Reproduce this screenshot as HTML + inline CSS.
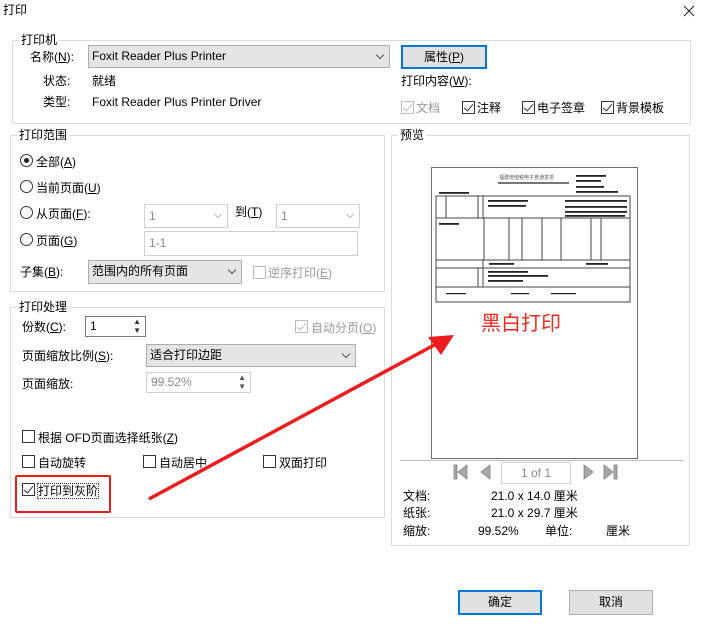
<!DOCTYPE html>
<html><head><meta charset="utf-8"><style>
*{margin:0;padding:0;box-sizing:border-box}
body{width:703px;height:628px;background:#fff;position:relative;overflow:hidden;font-family:"Liberation Sans","Noto Sans CJK SC",sans-serif;font-size:12px;color:#000}
.a{position:absolute;white-space:nowrap;line-height:14px}
.g{position:absolute;border:1px solid #dcdcdc}
.gl{position:absolute;background:#fff;padding:0 2px;line-height:14px}
.cb{position:absolute;width:13px;height:13px;border:1px solid #333;background:#fff}
.cb.k::after{content:"";position:absolute;left:3px;top:0px;width:4px;height:8px;border:solid #333;border-width:0 1.5px 1.5px 0;transform:rotate(40deg)}
.cb.d{border-color:#bcbcbc}.cb.d::after{border-color:#bcbcbc}
.rd{position:absolute;width:13px;height:13px;border:1px solid #333;border-radius:50%;background:#fff}
.rd.on::after{content:"";position:absolute;left:3px;top:3px;width:5px;height:5px;border-radius:50%;background:#222}
.cmb{position:absolute;background:#e5e5e5;border:1px solid #adadad;padding-left:3px;line-height:20px}
.box{position:absolute;border:1px solid #d0d0d0;background:#fff;color:#8a8a8a;padding-left:4px}
.chev{position:absolute;right:6px;top:6px;width:6px;height:6px;border:solid #555;border-width:0 1px 1px 0;transform:rotate(45deg)}
.chev.l{border-color:#bbb}
.btn{position:absolute;background:#e1e1e1;border:1px solid #adadad;text-align:center;line-height:22px}
.btn.p{border:2px solid #0078d7;line-height:20px}
.gr{color:#9a9a9a}
</style></head><body>
<div class="a" style="left:3px;top:3px">打印</div>
<svg style="position:absolute;left:683px;top:5px" width="12" height="12"><path d="M1 1L11 11M11 1L1 11" stroke="#222" stroke-width="1"/></svg>

<div class="g" style="left:12px;top:40px;width:679px;height:84px"></div>
<div class="gl" style="left:19px;top:33px">打印机</div>
<div class="a" style="left:30px;top:50px">名称(<u>N</u>):</div>
<div class="cmb" style="left:88px;top:45px;width:302px;height:23px">Foxit Reader Plus Printer<div class="chev"></div></div>
<div class="btn p" style="left:401px;top:45px;width:86px;height:24px">属性(<u>P</u>)</div>
<div class="a" style="left:43px;top:74px">状态:</div><div class="a" style="left:92px;top:74px">就绪</div>
<div class="a" style="left:43px;top:95px">类型:</div><div class="a" style="left:92px;top:95px">Foxit Reader Plus Printer Driver</div>
<div class="a" style="left:401px;top:74px">打印内容(<u>W</u>):</div>
<div class="cb k d" style="left:401px;top:101px"></div><div class="a gr" style="left:416px;top:101px">文档</div>
<div class="cb k" style="left:462px;top:101px"></div><div class="a" style="left:477px;top:101px">注释</div>
<div class="cb k" style="left:522px;top:101px"></div><div class="a" style="left:537px;top:101px">电子签章</div>
<div class="cb k" style="left:601px;top:101px"></div><div class="a" style="left:616px;top:101px">背景模板</div>

<div class="g" style="left:10px;top:135px;width:375px;height:157px"></div>
<div class="gl" style="left:17px;top:128px">打印范围</div>
<div class="rd on" style="left:20px;top:154px"></div><div class="a" style="left:36px;top:155px">全部(<u>A</u>)</div>
<div class="rd" style="left:20px;top:180px"></div><div class="a" style="left:36px;top:181px">当前页面(<u>U</u>)</div>
<div class="rd" style="left:20px;top:206px"></div><div class="a" style="left:36px;top:207px">从页面(<u>F</u>):</div>
<div class="box" style="left:144px;top:204px;width:84px;height:24px;line-height:22px">1<div class="chev l"></div></div>
<div class="a" style="left:235px;top:205px">到(<u>T</u>)</div>
<div class="box" style="left:276px;top:204px;width:84px;height:24px;line-height:22px">1<div class="chev l"></div></div>
<div class="rd" style="left:20px;top:233px"></div><div class="a" style="left:36px;top:234px">页面(<u>G</u>)</div>
<div class="box" style="left:144px;top:231px;width:214px;height:25px;line-height:23px">1-1</div>
<div class="a" style="left:20px;top:265px">子集(<u>B</u>):</div>
<div class="cmb" style="left:88px;top:260px;width:154px;height:24px">范围内的所有页面<div class="chev"></div></div>
<div class="cb d" style="left:253px;top:266px"></div><div class="a gr" style="left:268px;top:266px">逆序打印(<u>E</u>)</div>

<div class="g" style="left:10px;top:307px;width:375px;height:211px"></div>
<div class="gl" style="left:17px;top:300px">打印处理</div>
<div class="a" style="left:22px;top:320px">份数(<u>C</u>):</div>
<div class="box" style="left:85px;top:316px;width:61px;height:21px;border-color:#7a7a7a;color:#000;line-height:19px">1<span style="position:absolute;right:4px;top:0;font-size:8px;line-height:9px;color:#333">▲<br>▼</span></div>
<div class="cb k d" style="left:295px;top:320px"></div><div class="a gr" style="left:311px;top:321px">自动分页(<u>O</u>)</div>
<div class="a" style="left:22px;top:349px">页面缩放比例(<u>S</u>):</div>
<div class="cmb" style="left:146px;top:344px;width:210px;height:23px">适合打印边距<div class="chev"></div></div>
<div class="a" style="left:22px;top:377px">页面缩放:</div>
<div class="box" style="left:146px;top:372px;width:105px;height:21px;line-height:19px">99.52%<span style="position:absolute;right:4px;top:0;font-size:8px;line-height:9px;color:#555">▲<br>▼</span></div>
<div class="cb" style="left:22px;top:430px"></div><div class="a" style="left:38px;top:431px">根据 OFD页面选择纸张(<u>Z</u>)</div>
<div class="cb" style="left:22px;top:455px"></div><div class="a" style="left:38px;top:456px">自动旋转</div>
<div class="cb" style="left:143px;top:455px"></div><div class="a" style="left:159px;top:456px">自动居中</div>
<div class="cb" style="left:263px;top:455px"></div><div class="a" style="left:279px;top:456px">双面打印</div>
<div class="cb k" style="left:22px;top:483px"></div><div class="a" style="left:38px;top:484px;outline:1px dotted #333">打印到灰阶</div>
<div style="position:absolute;left:15px;top:475px;width:96px;height:38px;border:2px solid #e8201a;border-radius:2px"></div>

<div class="g" style="left:391px;top:135px;width:299px;height:411px"></div>
<div class="gl" style="left:398px;top:128px">预览</div>
<div style="position:absolute;left:431px;top:167px;width:207px;height:292px;border:1px solid #6d6d6d;background:#fff"></div>
<svg style="position:absolute;left:431px;top:167px" width="207" height="170">
<text x="68" y="12" font-size="5" fill="#555">福建增值税电子普通发票</text>
<rect x="67" y="15" width="71" height="2" fill="#777"/>
<g fill="#222"><rect x="145" y="8" width="30" height="1.8"/><rect x="145" y="13" width="25" height="1.8"/><rect x="145" y="19" width="28" height="1.8"/><rect x="145" y="24" width="42" height="1.8"/><rect x="8" y="25" width="30" height="1.8"/></g>
<g fill="none" stroke="#444" stroke-width="1">
<rect x="5" y="29" width="194" height="106"/><line x1="5" y1="51" x2="199" y2="51"/><line x1="5" y1="93" x2="199" y2="93"/><line x1="5" y1="101" x2="199" y2="101"/>
<line x1="15" y1="29" x2="15" y2="51"/><line x1="47" y1="29" x2="47" y2="51"/><line x1="52" y1="29" x2="52" y2="51"/>
<line x1="53" y1="51" x2="53" y2="93"/><line x1="78" y1="51" x2="78" y2="93"/><line x1="91" y1="51" x2="91" y2="93"/><line x1="111" y1="51" x2="111" y2="93"/><line x1="130" y1="51" x2="130" y2="93"/><line x1="160" y1="51" x2="160" y2="93"/><line x1="170" y1="51" x2="170" y2="93"/>
<line x1="52" y1="93" x2="52" y2="101"/><line x1="47" y1="101" x2="47" y2="120"/><line x1="52" y1="101" x2="52" y2="120"/><line x1="5" y1="120" x2="199" y2="120"/>
</g>
<g fill="#222"><rect x="57" y="33" width="40" height="1.8"/><rect x="57" y="38" width="38" height="1.8"/><rect x="134" y="33" width="62" height="1.8"/><rect x="134" y="39" width="62" height="1.8"/><rect x="134" y="44" width="62" height="1.8"/><rect x="134" y="48" width="60" height="1.8"/><rect x="8" y="56" width="20" height="1.8"/><rect x="58" y="96" width="25" height="1.8"/><rect x="155" y="96" width="22" height="1.8"/><rect x="57" y="104" width="40" height="1.8"/><rect x="57" y="108" width="60" height="1.8"/><rect x="57" y="113" width="35" height="1.8"/><rect x="15" y="126" width="20" height="1.2"/><rect x="80" y="126" width="18" height="1.2"/><rect x="120" y="126" width="25" height="1.2"/></g>
</svg>
<div class="a" style="left:481px;top:312px;color:#f02a1f;font-size:20px;line-height:24px">黑白打印</div>
<div style="position:absolute;left:400px;top:460px;width:284px;height:1px;background:#bfbfbf"></div>
<svg style="position:absolute;left:452px;top:463px" width="170" height="20">
<g fill="#a8a8a8" stroke="#777" stroke-width="0.7"><rect x="2" y="2" width="3" height="14"/><path d="M15 2 L6 9 L15 16Z"/><path d="M38 2 L29 9 L38 16Z"/><path d="M132 2 L141 9 L132 16Z"/><path d="M152 2 L161 9 L152 16Z"/><rect x="162" y="2" width="3" height="14"/></g>
</svg>
<div class="box" style="left:501px;top:462px;width:70px;height:22px;line-height:20px;text-align:center;padding:0;color:#888">1 of 1</div>
<div class="a" style="left:403px;top:489px">文档:</div><div class="a" style="left:491px;top:489px">21.0 x 14.0 厘米</div>
<div class="a" style="left:403px;top:506px">纸张:</div><div class="a" style="left:491px;top:506px">21.0 x 29.7 厘米</div>
<div class="a" style="left:403px;top:524px">缩放:</div><div class="a" style="left:478px;top:524px">99.52%</div><div class="a" style="left:545px;top:524px">单位:</div><div class="a" style="left:606px;top:524px">厘米</div>

<svg style="position:absolute;left:0;top:0" width="703" height="628">
<line x1="149" y1="499" x2="438" y2="343" stroke="#ee1c1c" stroke-width="3.5"/>
<path d="M454 335 L428 337 L441 355 Z" fill="#ee1c1c"/>
</svg>

<div class="btn p" style="left:458px;top:590px;width:84px;height:25px">确定</div>
<div class="btn" style="left:569px;top:590px;width:84px;height:25px">取消</div>
</body></html>
